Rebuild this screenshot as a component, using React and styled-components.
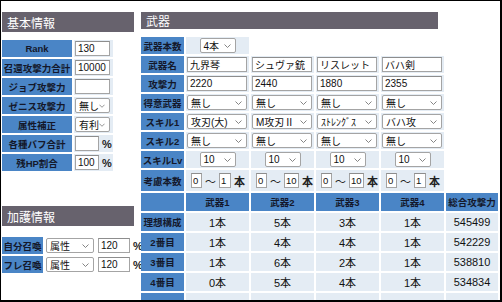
import React from 'react';
import styled, { createGlobalStyle } from 'styled-components';

const GlobalStyle = createGlobalStyle`
  body {
    margin: 0;
    background: #fff;
    font-family: "Liberation Sans", "Noto Sans CJK JP", sans-serif;
  }
`;

const Frame = styled.div`
  width: 502px;
  height: 302px;
  box-sizing: border-box;
  border-style: solid;
  border-color: #000;
  border-width: 1px 2px 2px 1px;
  overflow: hidden;
  display: flex;
  gap: 7px;
  padding: 11px 0 0 1px;
`;

const Column = styled.div`
  display: flex;
  flex-direction: column;
  width: ${p => p.$w}px;
`;

const SectionHeader = styled.div`
  width: ${p => p.$w}px;
  height: 20px;
  margin-top: ${p => p.$top || 0}px;
  box-sizing: border-box;
  padding-left: 5px;
  display: flex;
  align-items: center;
  background: #67626d;
  color: #fff;
  font-size: 12px;
`;

const FormGrid = styled.div`
  display: grid;
  grid-template-columns: ${p => p.$cols};
  grid-template-rows: ${p => p.$rows};
  gap: 2px;
  margin-top: ${p => p.$top || 8}px;
`;

const Label = styled.div`
  background: #4a85c6;
  color: #14182a;
  font-weight: bold;
  font-size: 9.5px;
  display: flex;
  align-items: center;
  justify-content: center;
  white-space: nowrap;
  overflow: hidden;
`;

const Cell = styled.div`
  background: ${p => (p.$plain ? '#fff' : '#e4ecf4')};
  display: flex;
  align-items: center;
  justify-content: ${p => (p.$center ? 'center' : 'flex-start')};
  gap: ${p => p.$gap || 0}px;
  padding: 0 ${p => (p.$pad ?? 1)}px;
  font-size: 11px;
  color: #111;
  white-space: nowrap;
`;

const TextInput = styled.input`
  width: ${p => p.$w}px;
  height: 15px;
  box-sizing: border-box;
  margin: 0;
  padding: 0 ${p => (p.$tight ? 1 : 2)}px;
  border: 1px solid #a4a4a4;
  border-top-color: #8d8d8d;
  background: #fff;
  font-family: inherit;
  font-size: ${p => (p.$tight ? 9.5 : 10)}px;
  color: #111;
  outline: none;
`;

const SelectBox = styled.div`
  width: ${p => p.$w}px;
  height: 15px;
  box-sizing: border-box;
  border: 1px solid #a4a4a4;
  border-radius: 2px;
  background: #fff;
  display: flex;
  align-items: center;
  justify-content: space-between;
  padding: 0 4px 0 3px;
  font-size: 10px;
  color: #111;
`;

const Unit = styled.span`
  font-size: 11px;
  font-weight: ${p => (p.$bold ? 'bold' : 'normal')};
  color: #222;
`;

const Chevron = () => (
  <svg width="7" height="4" viewBox="0 0 7 4">
    <path d="M0.5 0.5 L3.5 3.5 L6.5 0.5" stroke="#777" strokeWidth="0.9" fill="none" />
  </svg>
);

const Select = ({ w, children }) => (
  <SelectBox $w={w}>
    <span>{children}</span>
    <Chevron />
  </SelectBox>
);

const names = ['九界琴', 'シュヴァ銃', 'リスレット', 'バハ剣'];
const attacks = ['2220', '2440', '1880', '2355'];
const skill1 = ['攻刃(大)', 'M攻刃Ⅱ', 'ｽﾄﾚﾝｸﾞｽ', 'バハ攻'];
const ranges = ['1', '10', '10', '1'];

const results = [
  ['理想構成', '1本', '5本', '3本', '1本', '545499'],
  ['2番目', '1本', '4本', '4本', '1本', '542229'],
  ['3番目', '1本', '6本', '2本', '1本', '538810'],
  ['4番目', '0本', '5本', '4本', '1本', '534834'],
];

export default function App() {
  return (
    <>
      <GlobalStyle />
      <Frame>
        <Column $w={132}>
          <SectionHeader $w={132}>基本情報</SectionHeader>
          <FormGrid $cols="70px 39px" $rows="repeat(7, 17px)">
            <Label>Rank</Label>
            <Cell><TextInput $w={35} defaultValue="130" readOnly /></Cell>
            <Label>召還攻撃力合計</Label>
            <Cell><TextInput $w={35} defaultValue="10000" readOnly /></Cell>
            <Label>ジョブ攻撃力</Label>
            <Cell><TextInput $w={35} defaultValue="" readOnly /></Cell>
            <Label>ゼニス攻撃力</Label>
            <Cell><Select w={35}>無し</Select></Cell>
            <Label>属性補正</Label>
            <Cell><Select w={35}>有利</Select></Cell>
            <Label>各種バフ合計</Label>
            <Cell $gap={3}><TextInput $w={24} defaultValue="" readOnly /><Unit $bold>%</Unit></Cell>
            <Label>残HP割合</Label>
            <Cell $gap={3}><TextInput $w={24} defaultValue="100" readOnly /><Unit $bold>%</Unit></Cell>
          </FormGrid>

          <SectionHeader $w={132} $top={35}>加護情報</SectionHeader>
          <FormGrid $cols="41px 50px 39px" $rows="repeat(2, 17px)" $top={11}>
            <Label>自分召喚</Label>
            <Cell $plain><Select w={48}>属性</Select></Cell>
            <Cell $plain $gap={3}><TextInput $w={32} defaultValue="120" readOnly /><Unit $bold>%</Unit></Cell>
            <Label>フレ召喚</Label>
            <Cell $plain><Select w={48}>属性</Select></Cell>
            <Cell $plain $gap={3}><TextInput $w={32} defaultValue="120" readOnly /><Unit $bold>%</Unit></Cell>
          </FormGrid>
        </Column>

        <Column $w={356}>
          <SectionHeader $w={297}>武器</SectionHeader>
          <FormGrid
            $cols="43px 63px 63px 63px 63px 52px"
            $rows="repeat(7, 17px) 21px repeat(6, 18px)"
          >
            <Label>武器本数</Label>
            <Cell $center><Select w={36}>4本</Select></Cell>
            <Cell $plain /><Cell $plain /><Cell $plain /><Cell $plain />

            <Label>武器名</Label>
            {names.map(n => (
              <Cell key={n}><TextInput $w={60} defaultValue={n} readOnly /></Cell>
            ))}
            <Cell $plain />

            <Label>攻撃力</Label>
            {attacks.map(a => (
              <Cell key={a}><TextInput $w={60} defaultValue={a} readOnly /></Cell>
            ))}
            <Cell $plain />

            <Label>得意武器</Label>
            {names.map(n => (
              <Cell key={n}><Select w={60}>無し</Select></Cell>
            ))}
            <Cell $plain />

            <Label>スキル1</Label>
            {skill1.map(s => (
              <Cell key={s}><Select w={60}>{s}</Select></Cell>
            ))}
            <Cell $plain />

            <Label>スキル2</Label>
            {names.map(n => (
              <Cell key={n}><Select w={60}>無し</Select></Cell>
            ))}
            <Cell $plain />

            <Label>スキルLv</Label>
            {names.map(n => (
              <Cell key={n} $center><Select w={36}>10</Select></Cell>
            ))}
            <Cell $plain />

            <Label>考慮本数</Label>
            {ranges.map((r, i) => (
              <Cell key={i} $gap={3} $pad={5}>
                <TextInput $tight $w={11} defaultValue="0" readOnly />
                <Unit>～</Unit>
                <TextInput $tight $w={r.length > 1 ? 15 : 12} defaultValue={r} readOnly />
                <Unit $bold>本</Unit>
              </Cell>
            ))}
            <Cell $plain />

            <Label />
            <Label>武器1</Label>
            <Label>武器2</Label>
            <Label>武器3</Label>
            <Label>武器4</Label>
            <Label>総合攻撃力</Label>

            {results.map(row => (
              <React.Fragment key={row[0]}>
                <Label>{row[0]}</Label>
                {row.slice(1).map((v, i) => (
                  <Cell key={i} $center>{v}</Cell>
                ))}
              </React.Fragment>
            ))}

            <Label />
            <Cell /><Cell /><Cell /><Cell /><Cell />
          </FormGrid>
        </Column>
      </Frame>
    </>
  );
}
